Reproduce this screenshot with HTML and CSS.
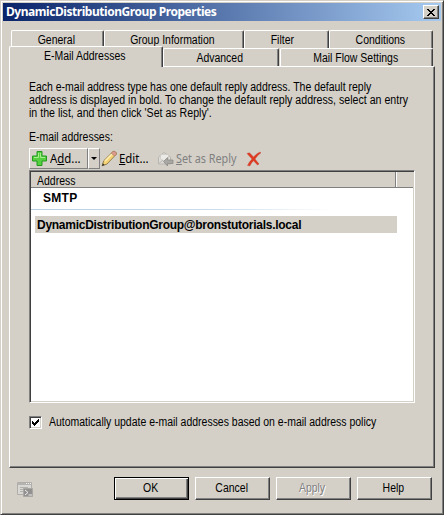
FILE: index.html
```html
<!DOCTYPE html>
<html lang="en">
<head>
<meta charset="utf-8">
<title>DynamicDistributionGroup Properties</title>
<link rel="stylesheet" href="styles.css">
</head>
<body>
<main class="window">
  <header class="titlebar">
    <h1 class="title">DynamicDistributionGroup Properties</h1>
    <button class="close" aria-label="Close"><svg width="8" height="7" viewBox="0 0 8 7" shape-rendering="crispEdges"><path d="M0 0h2v1h1v1h2V1h1V0h2v1H7v1H6v1H5v1h1v1h1v1h1v1H6V6H5V5H3v1H2v1H0V6h1V5h1V4h1V3H2V2H1V1H0z"/></svg></button>
  </header>
  <nav class="tabs">
    <div class="tabrow back">
      <div class="tab general"><span class="t">General</span></div>
      <div class="tab info"><span class="t">Group Information</span></div>
      <div class="tab filter"><span class="t">Filter</span></div>
      <div class="tab cond"><span class="t">Conditions</span></div>
    </div>
    <div class="tabrow front">
      <div class="tab email"><span class="t">E-Mail Addresses</span></div>
      <div class="tab adv"><span class="t">Advanced</span></div>
      <div class="tab flow"><span class="t">Mail Flow Settings</span></div>
    </div>
  </nav>
  <section class="panel">
    <p class="desc"><span class="t">Each e-mail address type has one default reply address. The default reply</span><br><span class="t wide">address is displayed in bold. To change the default reply address, select an entry</span><br><span class="t wide">in the list, and then click 'Set as Reply'.</span></p>
    <div class="label"><span class="t">E-mail addresses:</span></div>
    <div class="toolbar">
      <button class="add"><svg width="17" height="17" viewBox="0 0 17 17"><path d="M6 1.500h5V6h4.500v5H11v4.500H6V11H1.500V6H6z" fill="#55cf3f" stroke="#239a1c" stroke-linejoin="round"/><path d="M7.500 3v4.500H3M9.500 3v4.500H14" fill="none" stroke="#a5ee8b"/></svg><span class="t-add">A<u>d</u>d...</span></button>
      <button class="drop" aria-label="More"><i></i></button>
      <button class="tool edit"><svg width="17" height="17" viewBox="0 0 17 17"><path d="M1.200 15.800l1.500-5L12 1.500c1.500-.8 3.800.9 3.300 2.700L6 14z" fill="#f5d477" stroke="#8c7440" stroke-width=".9"/><path d="M4 11l8-8" stroke="#fff1b5" stroke-width="1.500"/><path d="M12 1.500c1.500-.8 3.800.9 3.300 2.700L13.500 6l-3.300-2.700z" fill="#dd9b8d" stroke="#a77668" stroke-width=".6"/><path d="M1 16l.8-2.700L3.700 15z" fill="#333"/></svg><span class="t-edit"><u>E</u>dit...</span></button>
      <button class="tool reply" disabled><svg width="17" height="16" viewBox="0 0 17 16"><path d="M1.500 6L7 1.500 13.500 6v7h-12z" fill="#dedcd7" stroke="#b9b6b0"/><path d="M3.500 3.500h8V8L7 10 3.500 8z" fill="#ebeae6" stroke="#c6c3bd" stroke-width=".6"/><path d="M2 12.500L6 9" stroke="#bbb8b2"/><path d="M6.500 10.500l4-4V9H16v3.500h-5.500V15z" fill="#aaa8a4" stroke="#8d8b87" stroke-width=".8"/></svg><span class="t-reply"><u>S</u>et as Reply</span></button>
      <button class="tool del" aria-label="Remove"><svg width="16" height="16" viewBox="0 0 16 16"><path d="M1 2.500L3.500 1.800 7.500 6Q10.500 2.500 13.500 1.200L15 1.800Q11.500 4 9 8L13 13l-1.500 1L7.500 9.700Q5 12 4 14.800L1.500 14.500Q3 11 6 8z" fill="#df3b22" stroke="#c23a28" stroke-width=".4"/></svg></button>
    </div>
    <div class="list">
      <div class="head"><div class="col"><span class="t">Address</span></div><div class="rest"></div></div>
      <div class="group"><span class="t-smtp">SMTP</span></div>
      <div class="rule"></div>
      <div class="row"><span class="t-row">DynamicDistributionGroup@bronstutorials.local</span></div>
    </div>
    <label class="check"><span class="box"><svg width="7" height="7" viewBox="0 0 7 7" shape-rendering="crispEdges"><path d="M0 2h1v1h1v1h1V3h1V2h1V1h1V0h1v3H6v1H5v1H4v1H3v1H2V6H1V5H0z"/></svg></span><span class="t">Automatically update e-mail addresses based on e-mail address policy</span></label>
  </section>
  <footer class="footer">
    <svg class="script" width="17" height="17" viewBox="0 0 17 17"><path d="M.5 1.500h14v12H.5z" fill="#d9d8d5" stroke="#b0aeaa"/><path d="M1 2h13v2H1z" fill="#b5b3b0"/><path d="M9 2.500h1m1 0h1m1 0h1" stroke="#eee"/><path d="M3 6.500h8M3 8.500h5M3 10.500h4" stroke="#b2b0ac"/><path d="M6.500 7.500h9v8h-9z" fill="#92918f" stroke="#a9a7a4"/><path d="M8 9l3 2.500L8 14M11.500 14H15" fill="none" stroke="#eee"/></svg>
    <button class="btn default"><span class="t">OK</span></button>
    <button class="btn"><span class="t">Cancel</span></button>
    <button class="btn" disabled><span class="t">Apply</span></button>
    <button class="btn"><span class="t">Help</span></button>
  </footer>
</main>
</body>
</html>
```
FILE: styles.css
```css
* { box-sizing: border-box; }
body { margin: 0; background: #d4d0c8; font: 12px/13px "Liberation Sans", Arial, sans-serif; color: #000; }
button { font: inherit; color: inherit; padding: 0; margin: 0; border: 0; background: #d4d0c8; border-radius: 0; }
span { white-space: nowrap; }
svg { display: block; flex: none; }
u { text-underline-offset: 1px; text-decoration-thickness: 1px; }

/* Condensed dialog lettering */
.t { display: inline-block; transform: scaleX(.873); transform-origin: 0 50%; }
.t.wide { transform: scaleX(.884); }
.tab .t, .btn .t { transform-origin: 50% 50%; }

.window { width: 444px; height: 515px; padding: 1px; border: 1px solid #d4d0c8; border-right-color: #404040; border-bottom-color: #404040; box-shadow: inset 1px 1px #fff, inset -1px -1px #808080; }
.titlebar { height: 18px; margin: 1px; display: flex; align-items: center; justify-content: space-between; padding: 0 2px 0 3px; background: linear-gradient(90deg, #0a246a, #a6caf0); }
.title { margin: 0; font: bold 12px/18px "Noto Sans", Tahoma, sans-serif; color: #fff; letter-spacing: -.45px; white-space: nowrap; }
.close { width: 16px; height: 14px; display: flex; align-items: center; justify-content: center; border: 1px solid; border-color: #fff #404040 #404040 #fff; box-shadow: inset -1px -1px #808080; }

.tabs { padding: 8px 0 0 7px; }
.tabrow { display: flex; }
.back { padding-left: 2px; height: 16px; }
.front { height: 20px; align-items: flex-end; }
.tab { height: 18px; display: flex; justify-content: center; line-height: 19px; border: 1px solid; border-color: #fff #404040 transparent #fff; border-bottom: 0; border-radius: 2px 2px 0 0; box-shadow: inset -1px 0 #808080; padding-right: 2px; }
.general { width: 93px; padding-right: 3px; }
.info { width: 140px; padding-right: 3px; }
.filter { width: 85px; padding-right: 9px; }
.cond { width: 104px; }
.email { width: 154px; height: 21px; margin-bottom: -1px; background: #d4d0c8; position: relative; }
.adv { width: 116px; margin-right: 1px; padding-right: 3px; }
.flow { width: 153px; }

.panel { width: 426px; height: 402px; margin-left: 7px; padding: 14px 19px 0 19px; border: 1px solid; border-color: #fff #404040 #404040 #fff; box-shadow: inset -1px -1px #808080; }
.desc { margin: 0; height: 39px; white-space: nowrap; }
.label { height: 13px; margin-top: 11px; }
.toolbar { height: 21px; margin-top: 4px; display: flex; }
.toolbar button { display: flex; align-items: center; flex: none; }
.toolbar .add { width: 59px; padding-left: 1px; gap: 2px; border: 1px solid; border-color: #fff #808080 #808080 #fff; }
.toolbar .drop { width: 12px; justify-content: center; border: 1px solid; border-color: #fff #808080 #808080 #fff; }
.drop i { border: 3px solid transparent; border-top-color: #000; border-bottom: 0; }
.toolbar span { font-family: "Noto Sans", Tahoma, sans-serif; font-size: 12px; transform: scaleX(.95); transform-origin: 0 50%; }
.toolbar .edit { width: 57px; gap: 1px; padding-left: 1px; }
.toolbar .reply { width: 89px; gap: 2px; color: #808080; }
.toolbar .t-reply { transform: scaleX(.9); }
.toolbar .del { width: 16px; }

.list { width: 386px; height: 233px; margin-top: 1px; background: #fff; border: 1px solid; border-color: #808080 #fff #fff #808080; box-shadow: inset 1px 1px #404040, inset -1px -1px #d4d0c8; padding: 1px; }
.head { height: 16px; display: flex; background: #d4d0c8; border-bottom: 1px solid #808080; line-height: 18px; }
.col { width: 365px; padding-left: 6px; border-right: 1px solid #808080; }
.rest { flex: 1; border-left: 1px solid #fff; }
.group { height: 21px; padding: 3px 0 0 12px; line-height: 15px; font-weight: bold; }
.t-smtp { letter-spacing: .3px; }
.rule { height: 1px; width: 300px; background: linear-gradient(90deg, #b5cfe5, #c9dcec 60%, #fff); }
.row { width: 362px; height: 17px; margin: 6px 0 0 4px; padding-left: 2px; line-height: 18px; font-weight: bold; background: #d4d0c8; }
.t-row { letter-spacing: -.27px; }

.check { display: flex; align-items: center; margin-top: 13px; gap: 7px; line-height: 15px; height: 13px; }
.box { width: 13px; height: 13px; flex: none; padding: 3px; display: block; background: #fff; border: 1px solid; border-color: #808080 #fff #fff #808080; box-shadow: inset 1px 1px #404040, inset -1px -1px #d4d0c8; }
.box svg { margin: -1px 0 0 -1px; }

.footer { display: flex; align-items: flex-start; gap: 6px; padding: 9px 0 0 15px; }
.script { margin: 4px 74px 0 0; }
.btn { width: 75px; height: 23px; border: 1px solid; border-color: #fff #404040 #404040 #fff; box-shadow: inset -1px -1px #808080; line-height: 21px; padding-right: 2px; }
.default { border-color: #000; box-shadow: inset 1px 1px #fff, inset -1px -1px #404040, inset -2px -2px #808080; }
.btn:disabled { color: #808080; text-shadow: 1px 1px #fff; }
```
